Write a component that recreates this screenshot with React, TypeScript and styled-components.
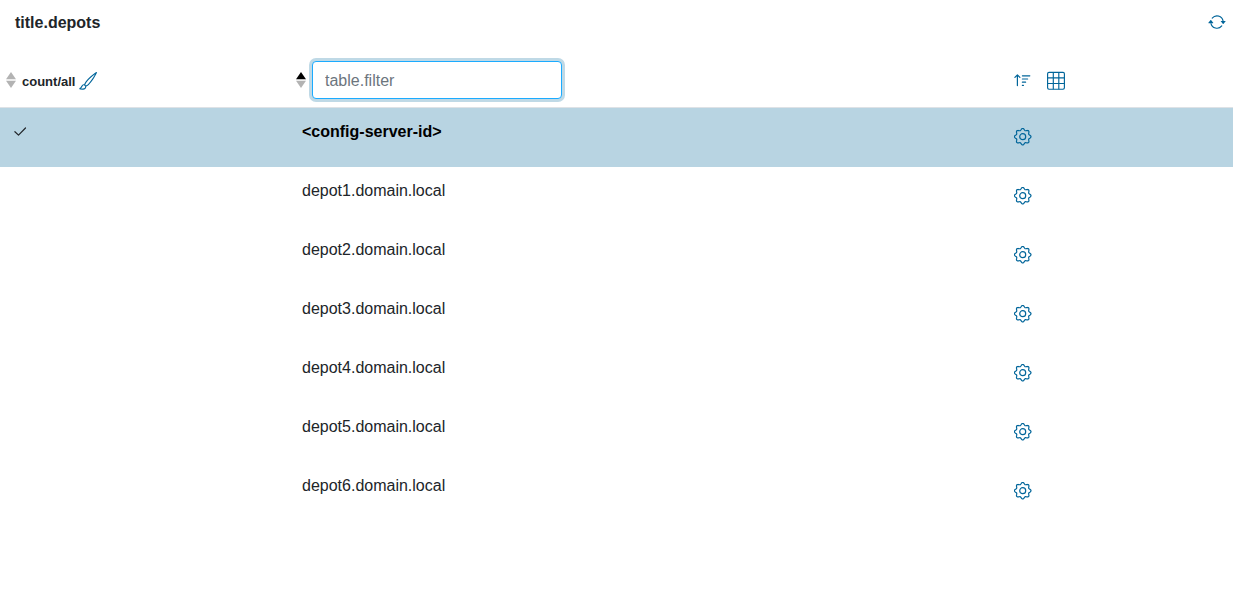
import React from "react";
import styled, { createGlobalStyle } from "styled-components";
import { BsArrowRepeat, BsBrush } from "react-icons/bs";

const GlobalStyle = createGlobalStyle`
  *, *::before, *::after { box-sizing: border-box; }
  body {
    margin: 0;
    background: #fff;
    color: #212529;
    font-family: "Liberation Sans", Arial, sans-serif;
    font-size: 16px;
    line-height: 24px;
  }
`;

const Page = styled.main`
  padding-right: 15px;
`;

const TitleBar = styled.header`
  display: flex;
  align-items: center;
  justify-content: space-between;
  height: 44px;
  padding: 0 7px 0 15px;
`;

const Title = styled.h1`
  margin: 0;
  padding-top: 2px;
  font-size: 16px;
  font-weight: bold;
`;

const IconButton = styled.button`
  display: inline-flex;
  align-items: center;
  justify-content: center;
  padding: 0;
  border: 0;
  background: none;
  color: #00659a;
  cursor: pointer;
`;

const LowIconButton = styled(IconButton)`
  padding-top: 2px;
`;

const Table = styled.table`
  width: 100%;
  margin-top: 10px;
  table-layout: fixed;
  border-collapse: separate;
  border-spacing: 0;
`;

const Col = styled.col<{ $width?: number }>`
  width: ${(p) => (p.$width ? `${p.$width}px` : "auto")};
`;

const HeadCell = styled.th`
  height: 54px;
  padding: 0 4px 2px 6px;
  border-bottom: 1px solid #dee2e6;
  text-align: left;
  vertical-align: middle;
`;

const HeadContent = styled.div<{ $gap: number; $indent?: number }>`
  display: flex;
  align-items: center;
  gap: ${(p) => p.$gap}px;
  padding-left: ${(p) => p.$indent ?? 0}px;
`;

const CountLabel = styled.span`
  margin-left: 2px;
  padding-top: 4px;
  font-size: 13px;
`;

const FilterInput = styled.input`
  width: 250px;
  height: 38px;
  padding: 8px 12px 6px;
  border: 1px solid #1babff;
  border-radius: 4px;
  outline: 0;
  box-shadow: 0 0 0 3px #bfd9e6;
  background: #fff;
  color: #495057;
  font: inherit;
  font-weight: normal;
  &::placeholder { color: #6c757d; opacity: 1; }
`;

const Row = styled.tr<{ $selected?: boolean }>`
  background: ${(p) => (p.$selected ? "#b8d4e2" : "#fff")};
  color: ${(p) => (p.$selected ? "#000" : "#212529")};
  font-weight: ${(p) => (p.$selected ? "bold" : "normal")};
`;

const Cell = styled.td`
  height: 59px;
  padding: 12px 14px;
  vertical-align: top;
`;

const CheckCell = styled(Cell)`
  padding: 17px 13px;
  line-height: 0;
`;

const ActionCell = styled(Cell)`
  padding: 20px 12px;
  line-height: 0;
`;

const SortButton = ({ active, label }: { active?: boolean; label: string }) => (
  <IconButton type="button" aria-label={label}>
    <svg width="10" height="16" viewBox="0 0 10 16">
      <path d="M0 7.2L5 0L10 7.2Z" fill={active ? "#000" : "#b3b3b3"} />
      <path d="M0 8.8L5 16L10 8.8Z" fill="#b3b3b3" />
    </svg>
  </IconButton>
);

// Eight shallow rounded teeth around the centre of an 18 unit box.
const gearOutline =
  Array.from({ length: 96 }, (_, i) => {
    const angle = (i / 96) * Math.PI * 2;
    const radius = 7.4 + 0.9 * Math.cos(8 * angle);
    const x = 8.7 + radius * Math.cos(angle);
    const y = 8.7 + radius * Math.sin(angle);
    return `${i === 0 ? "M" : "L"}${x.toFixed(2)} ${y.toFixed(2)}`;
  }).join("") + "Z";

const GearIcon = () => (
  <svg width="18" height="18" viewBox="0 0 18 18" fill="none" stroke="currentColor" strokeWidth="1.2" strokeLinejoin="round">
    <path d={gearOutline} />
    <circle cx="8.7" cy="8.7" r="3" />
  </svg>
);

const SortUpIcon = () => (
  <svg width="18" height="18" viewBox="0 0 18 18" fill="none" stroke="currentColor" strokeWidth="1.2" strokeLinecap="round" strokeLinejoin="round">
    <path d="M3.4 14.6V3.9M0.9 6.3L3.4 3.8L5.9 6.3M8.4 4.8H15.8M8.4 8H13.6M8.4 11.2H11.6M8.4 14.4H9.4" />
  </svg>
);

const GridIcon = () => (
  <svg width="18" height="19" viewBox="0 0 18 19" fill="none" stroke="currentColor" strokeWidth="1.15">
    <rect x="0.6" y="1.4" width="16.8" height="16.8" rx="1.4" />
    <path d="M6.3 1.4V18.2M11.8 1.4V18.2M0.6 6.9H17.4M0.6 12.5H17.4" />
  </svg>
);

const CheckIcon = () => (
  <svg width="14" height="14" viewBox="0 0 14 14" fill="none" stroke="#212529" strokeWidth="1.2" strokeLinecap="round" strokeLinejoin="round" role="img" aria-label="Selected">
    <path d="M1.9 6.7L5.5 10.1L12.5 3" />
  </svg>
);

const depots = [
  "<config-server-id>",
  "depot1.domain.local",
  "depot2.domain.local",
  "depot3.domain.local",
  "depot4.domain.local",
  "depot5.domain.local",
  "depot6.domain.local",
];

export default function App() {
  return (
    <>
      <GlobalStyle />
      <Page>
        <TitleBar>
          <Title>title.depots</Title>
          <IconButton type="button" aria-label="Reload"><BsArrowRepeat size={18} /></IconButton>
        </TitleBar>
        <Table>
          <colgroup>
            <Col $width={288} />
            <Col />
            <Col $width={231} />
          </colgroup>
          <thead>
            <tr>
              <HeadCell scope="col">
                <HeadContent $gap={4}>
                  <SortButton label="Sort by selection" />
                  <CountLabel>count/all</CountLabel>
                  <LowIconButton type="button" aria-label="Clear selection"><BsBrush size={18} /></LowIconButton>
                </HeadContent>
              </HeadCell>
              <HeadCell scope="col">
                <HeadContent $gap={6} $indent={2}>
                  <SortButton label="Sort by depot" active />
                  <FilterInput type="text" placeholder="table.filter" aria-label="Filter depots" />
                </HeadContent>
              </HeadCell>
              <HeadCell scope="col">
                <HeadContent $gap={15} $indent={6}>
                  <IconButton type="button" aria-label="Sort order"><SortUpIcon /></IconButton>
                  <LowIconButton type="button" aria-label="Choose columns"><GridIcon /></LowIconButton>
                </HeadContent>
              </HeadCell>
            </tr>
          </thead>
          <tbody>
            {depots.map((name, i) => (
              <Row key={name} $selected={i === 0} aria-selected={i === 0}>
                <CheckCell>{i === 0 && <CheckIcon />}</CheckCell>
                <Cell>{name}</Cell>
                <ActionCell>
                  <IconButton type="button" aria-label={`Configure ${name}`}><GearIcon /></IconButton>
                </ActionCell>
              </Row>
            ))}
          </tbody>
        </Table>
      </Page>
    </>
  );
}
